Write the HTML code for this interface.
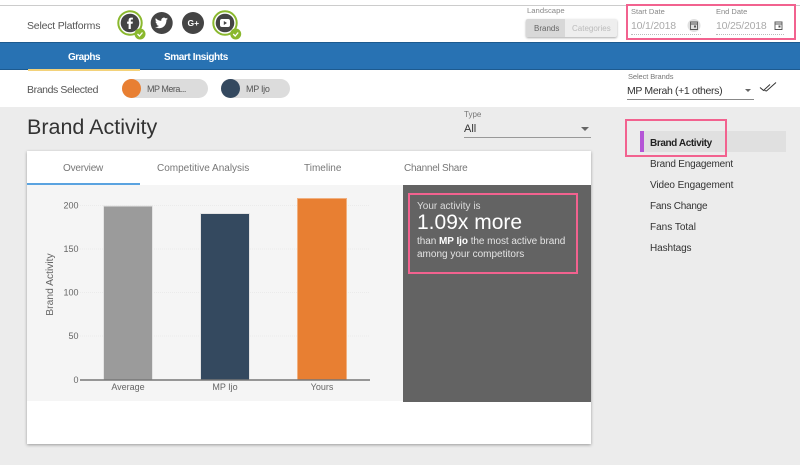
<!DOCTYPE html>
<html><head><meta charset="utf-8"><style>
html,body{margin:0;padding:0;background:#ececec}
body{width:800px;height:465px;position:relative;overflow:hidden;font-family:"Liberation Sans",sans-serif;color:#444}
.a{position:absolute;white-space:nowrap}
.t{position:absolute;white-space:nowrap;line-height:1}
.n{font-size:10px;color:#333}
</style></head><body>
<div class="a" style="left:0;top:0;width:800px;height:5px;background:#fff"></div>
<div class="a" style="left:0;top:5px;width:800px;height:1px;background:#ccc"></div>
<div class="a" style="left:0;top:6px;width:800px;height:36px;background:#fff"></div>
<div class="a" style="left:0;top:42px;width:800px;height:28px;background:#2872b3;border-top:1px solid #1d5a8f;border-bottom:1px solid #1d5a8f;box-sizing:border-box"></div>
<div class="a" style="left:0;top:70px;width:800px;height:37px;background:#fff"></div>
<div class="t" style="left:27px;top:21px;font-size:10.500px;letter-spacing:-.2px;color:#555">Select Platforms</div>

<svg class="a" style="left:110px;top:6px" width="140" height="38" viewBox="0 0 140 38">
<circle cx="20" cy="17" r="11.700" fill="#fff" stroke="#8ab82e" stroke-width="2"/>
<circle cx="20" cy="17" r="9.300" fill="#444"/>
<path d="M20.800 23v-5.300h1.800l.3-2.100h-2.100v-1.200c0-.6.200-.9.900-.9h1.200v-1.900h-1.600c-1.800 0-2.700 1.100-2.700 2.700v1.300h-1.500v2.100h1.500v5.300z" fill="#fff"/>
<circle cx="30" cy="28" r="5.500" fill="#8ab82e"/><path d="M27.500 28l2 2 3-3.500" fill="none" stroke="#fff" stroke-width="1.300"/>
<circle cx="51.700" cy="17" r="11" fill="#444"/>
<path d="M58 12.800c-.5.200-1 .4-1.600.4.600-.3 1-.9 1.200-1.500-.5.300-1.100.5-1.800.7-1-1.100-2.800-1.100-3.800 0-.7.700-.9 1.700-.7 2.500-2.200-.1-4.200-1.100-5.500-2.800-.7 1.200-.3 2.800.9 3.600-.4 0-.9-.1-1.200-.3 0 1.300.9 2.400 2.200 2.700-.4.100-.8.100-1.200 0 .4 1.100 1.400 1.800 2.500 1.800-1.100.9-2.500 1.300-3.900 1.100 5.600 3.200 11.300-.1 11.400-7.100.5-.3 1-.7 1.500-1.100z" fill="#fff"/>
<circle cx="83" cy="17" r="11" fill="#444"/>
<text x="77.500" y="20" font-family="Liberation Sans" font-size="8.500" font-weight="700" fill="#fff">G+</text>
<circle cx="115" cy="17" r="11.700" fill="#fff" stroke="#8ab82e" stroke-width="2"/>
<circle cx="115" cy="17" r="9.300" fill="#444"/>
<rect x="110" y="13" width="10" height="8" rx="2" fill="#fff"/><path d="M113.800 15v4l3.200-2z" fill="#444"/>
<circle cx="125.700" cy="28" r="5.500" fill="#8ab82e"/><path d="M123.200 28l2 2 3-3.500" fill="none" stroke="#fff" stroke-width="1.300"/>
</svg>

<div class="t" style="left:68px;top:53px;font-size:10px;letter-spacing:-.5px;font-weight:700;color:#fff">Graphs</div>
<div class="t" style="left:164px;top:53px;font-size:10px;letter-spacing:-.4px;font-weight:700;color:#fff">Smart Insights</div>
<div class="a" style="left:28px;top:69px;width:112px;height:2px;background:#f3d27a"></div>

<div class="t" style="left:27px;top:85px;font-size:10.500px;letter-spacing:-.4px;color:#555">Brands Selected</div>
<div class="a" style="left:122px;top:79px;width:86px;height:19px;border-radius:10px;background:#dcdcdc"></div>
<div class="a" style="left:122px;top:79px;width:19px;height:19px;border-radius:50%;background:#e87f32"></div>
<div class="t" style="left:147px;top:85px;font-size:9px;letter-spacing:-.5px;color:#555">MP Mera...</div>
<div class="a" style="left:221px;top:79px;width:69px;height:19px;border-radius:10px;background:#dcdcdc"></div>
<div class="a" style="left:221px;top:79px;width:19px;height:19px;border-radius:50%;background:#34495f"></div>
<div class="t" style="left:246px;top:85px;font-size:9px;letter-spacing:-.3px;color:#555">MP Ijo</div>

<div class="t" style="left:527px;top:7px;font-size:7.700px;color:#888">Landscape</div>
<div class="a" style="left:526px;top:19px;width:91px;height:18px;background:#eee;border-radius:2px;box-shadow:0 1px 2px #aaa"></div>
<div class="a" style="left:526px;top:19px;width:39px;height:18px;background:#d8d8d8;border-radius:2px 0 0 2px"></div>
<div class="t" style="left:534px;top:25px;font-size:8px;color:#666">Brands</div>
<div class="t" style="left:572px;top:25px;font-size:8px;color:#bbb">Categories</div>

<div class="a" style="left:626px;top:4px;width:166px;height:32px;border:2px solid #f2628f"></div>
<div class="t" style="left:631px;top:8px;font-size:7.500px;color:#888">Start Date</div>
<div class="t" style="left:716px;top:8px;font-size:7.500px;color:#888">End Date</div>
<div class="t" style="left:631px;top:21px;font-size:10.500px;letter-spacing:-.2px;color:#aaa">10/1/2018</div>
<div class="t" style="left:716px;top:21px;font-size:10.500px;letter-spacing:-.2px;color:#aaa">10/25/2018</div>
<div class="a" style="left:631px;top:34px;width:70px;border-top:1px dotted #bbb"></div>
<div class="a" style="left:716px;top:34px;width:68px;border-top:1px dotted #bbb"></div>
<svg class="a" style="left:687px;top:18px" width="100" height="15" viewBox="0 0 100 15">
<circle cx="7" cy="7.500" r="6.500" fill="#e0e0e0"/>
<path d="M3.500 4h7v7.500h-7zM3.500 6h7" fill="none" stroke="#555" stroke-width=".9"/><rect x="7" y="7.500" width="2" height="2" fill="#555"/>
<path d="M88 4h7v7.500h-7zM88 6h7" fill="none" stroke="#555" stroke-width=".9"/><rect x="91.500" y="7.500" width="2" height="2" fill="#555"/>
</svg>

<div class="t" style="left:628px;top:73px;font-size:7.500px;letter-spacing:-.1px;color:#777">Select Brands</div>
<div class="t" style="left:627px;top:86px;font-size:10.500px;letter-spacing:-.35px;color:#333">MP Merah (+1 others)</div>
<div class="a" style="left:627px;top:99px;width:127px;height:1px;background:#888"></div>
<svg class="a" style="left:758px;top:80px" width="20" height="14" viewBox="0 0 20 14">
<path d="M2 7.500l3.500 3 6.500-6M6.500 10.500l2 .5 9.500-8.500" fill="none" stroke="#333" stroke-width="1"/>
</svg>

<div class="t" style="left:27px;top:117px;font-size:21.500px;color:#333">Brand Activity</div>
<div class="t" style="left:464px;top:111px;font-size:8px;color:#777">Type</div>
<div class="t" style="left:464px;top:124px;font-size:11px;color:#333">All</div>
<div class="a" style="left:464px;top:137px;width:127px;height:1px;background:#999"></div>
<div class="a" style="left:581px;top:127px;width:0;height:0;border:4px solid transparent;border-top:4px solid #666"></div>
<div class="a" style="left:745px;top:89px;width:0;height:0;border:3.500px solid transparent;border-top:3.500px solid #666"></div>

<div class="a" style="left:27px;top:151px;width:564px;height:293px;background:#fff;box-shadow:0 1px 3px rgba(0,0,0,.35)"></div>
<div class="a" style="left:27px;top:183px;width:113px;height:2px;background:#5aa3e0"></div>
<div class="t" style="left:63px;top:164px;font-size:10px;letter-spacing:-.2px;color:#777">Overview</div>
<div class="t" style="left:157px;top:164px;font-size:10px;color:#777">Competitive Analysis</div>
<div class="t" style="left:304px;top:164px;font-size:10px;color:#777">Timeline</div>
<div class="t" style="left:404px;top:164px;font-size:10px;letter-spacing:-.25px;color:#777">Channel Share</div>
<div class="a" style="left:27px;top:185px;width:376px;height:216px;background:#f5f5f5"></div>
<div class="a" style="left:403px;top:185px;width:188px;height:217px;background:#636363"></div>

<svg class="a" style="left:27px;top:185px" width="376" height="216" viewBox="0 0 376 216" font-family="Liberation Sans">
<g stroke="#ebebeb" stroke-dasharray="1 1"><path d="M53 20.500h290M53 64h290M53 107.500h290M53 151h290"/></g>
<rect x="76.500" y="21" width="49" height="174" fill="#9b9b9b" stroke="#e4e4e4"/>
<rect x="173.500" y="28.500" width="49" height="166.500" fill="#34495f" stroke="#e4e4e4"/>
<rect x="270.500" y="13.500" width="49" height="181.500" fill="#e87f32" stroke="#f0b080"/>
<path d="M53 195h290" stroke="#777" stroke-width="1.500"/>
<g font-size="9" fill="#666" text-anchor="end"><text x="51.500" y="23.500">200</text><text x="51.500" y="67">150</text><text x="51.500" y="110.500">100</text><text x="51.500" y="154">50</text><text x="51.500" y="198">0</text></g>
<g font-size="9" fill="#666" text-anchor="middle"><text x="101" y="205">Average</text><text x="198" y="205">MP Ijo</text><text x="295" y="205">Yours</text></g>
<text transform="translate(26 99.500) rotate(-90)" font-size="10.300" fill="#666" text-anchor="middle">Brand Activity</text>
</svg>

<div class="a" style="left:408px;top:193px;width:166px;height:77px;border:2px solid #f2628f"></div>
<div class="t" style="left:417px;top:202px;font-size:10px;color:#ddd">Your activity is</div>
<div class="t" style="left:417px;top:212px;font-size:21px;color:#fff">1.09x more</div>
<div class="t" style="left:417px;top:237px;font-size:10px;letter-spacing:-.05px;color:#e4e4e4">than <b style="color:#fff">MP Ijo</b> the most active brand</div>
<div class="t" style="left:417px;top:250px;font-size:10px;color:#e4e4e4">among your competitors</div>

<div class="a" style="left:640px;top:131px;width:146px;height:21px;background:#e0e0e0"></div>
<div class="a" style="left:640px;top:131px;width:4px;height:21px;background:#b455d6"></div>
<div class="a" style="left:625px;top:119px;width:98px;height:34px;border:2px solid #f2628f"></div>
<div class="t n" style="left:650px;top:139px;letter-spacing:-.4px;font-weight:700;color:#222">Brand Activity</div>
<div class="t n" style="left:650px;top:160px;letter-spacing:-.2px">Brand Engagement</div>
<div class="t n" style="left:650px;top:181px;letter-spacing:-.1px">Video Engagement</div>
<div class="t n" style="left:650px;top:202px;letter-spacing:-.25px">Fans Change</div>
<div class="t n" style="left:650px;top:223px">Fans Total</div>
<div class="t n" style="left:650px;top:244px;letter-spacing:-.1px">Hashtags</div>
</body></html>
